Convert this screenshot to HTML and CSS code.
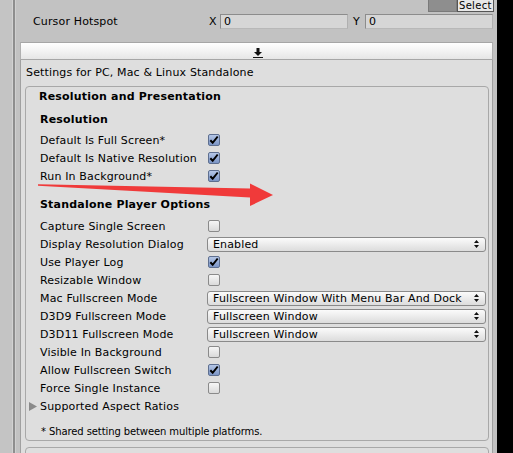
FILE: index.html
```html
<!DOCTYPE html>
<html>
<head>
<meta charset="utf-8">
<link rel="stylesheet" href="styles.css">
</head>
<body>
<div class="window">
  <div class="gutter"></div>
  <div class="sep"></div>
  <div class="main">
    <div class="top">
      <div class="select-row"><div class="swatch"></div><div class="select-btn">Select</div></div>
      <div class="hotspot-row">
        <span class="hs-label">Cursor Hotspot</span>
        <span class="axis">X</span><div class="field">0</div>
        <span class="axis axis-y">Y</span><div class="field">0</div>
      </div>
    </div>
    <div class="bar">
      <svg class="down-icon" width="10" height="10" viewBox="0 0 10 10"><path d="M3.5 0h3v4h2.5l-4 4l-4-4h2.5z" fill="#111"/><rect x="0" y="9" width="10" height="1" fill="#111"/></svg>
    </div>
    <div class="panel">
      <div class="platform-title">Settings for PC, Mac &amp; Linux Standalone</div>
      <div class="box">
        <div class="heading">Resolution and Presentation</div>
        <div class="subheading sub-res">Resolution</div>
        <div class="row row-first"><span class="label">Default Is Full Screen*</span><span class="cb on"><svg viewBox="0 0 12 12"><path d="M2.3 6.2l2.4 2.6l5-6.3" fill="none" stroke="#000" stroke-width="2"/></svg></span></div>
        <div class="row"><span class="label">Default Is Native Resolution</span><span class="cb on"><svg viewBox="0 0 12 12"><path d="M2.3 6.2l2.4 2.6l5-6.3" fill="none" stroke="#000" stroke-width="2"/></svg></span></div>
        <div class="row"><span class="label">Run In Background*</span><span class="cb on"><svg viewBox="0 0 12 12"><path d="M2.3 6.2l2.4 2.6l5-6.3" fill="none" stroke="#000" stroke-width="2"/></svg></span></div>

        <div class="subheading sub-sa">Standalone Player Options</div>
        <div class="row row-sa"><span class="label">Capture Single Screen</span><span class="cb"></span></div>
        <div class="row"><span class="label">Display Resolution Dialog</span><div class="dropdown"><span>Enabled</span><svg class="updown" width="5" height="8" viewBox="0 0 5 8"><path d="M2.5 0l2.5 3h-5z M2.5 8l2.5-3h-5z" fill="#111"/></svg></div></div>
        <div class="row"><span class="label">Use Player Log</span><span class="cb on"><svg viewBox="0 0 12 12"><path d="M2.3 6.2l2.4 2.6l5-6.3" fill="none" stroke="#000" stroke-width="2"/></svg></span></div>
        <div class="row"><span class="label">Resizable Window</span><span class="cb"></span></div>
        <div class="row"><span class="label">Mac Fullscreen Mode</span><div class="dropdown"><span>Fullscreen Window With Menu Bar And Dock</span><svg class="updown" width="5" height="8" viewBox="0 0 5 8"><path d="M2.5 0l2.5 3h-5z M2.5 8l2.5-3h-5z" fill="#111"/></svg></div></div>
        <div class="row"><span class="label">D3D9 Fullscreen Mode</span><div class="dropdown"><span>Fullscreen Window</span><svg class="updown" width="5" height="8" viewBox="0 0 5 8"><path d="M2.5 0l2.5 3h-5z M2.5 8l2.5-3h-5z" fill="#111"/></svg></div></div>
        <div class="row"><span class="label">D3D11 Fullscreen Mode</span><div class="dropdown"><span>Fullscreen Window</span><svg class="updown" width="5" height="8" viewBox="0 0 5 8"><path d="M2.5 0l2.5 3h-5z M2.5 8l2.5-3h-5z" fill="#111"/></svg></div></div>
        <div class="row"><span class="label">Visible In Background</span><span class="cb"></span></div>
        <div class="row"><span class="label">Allow Fullscreen Switch</span><span class="cb on"><svg viewBox="0 0 12 12"><path d="M2.3 6.2l2.4 2.6l5-6.3" fill="none" stroke="#000" stroke-width="2"/></svg></span></div>
        <div class="row"><span class="label">Force Single Instance</span><span class="cb"></span></div>
        <div class="row foldout"><svg class="tri" width="8" height="9" viewBox="0 0 8 9"><path d="M0 0l8 4.5l-8 4.5z" fill="#8a8a8a"/></svg><span>Supported Aspect Ratios</span></div>
        <div class="footnote">* Shared setting between multiple platforms.</div>
      </div>
      <div class="box box-next"></div>
    </div>
  </div>
  <div class="black"></div>
</div>
<svg class="annot" width="513" height="453" viewBox="0 0 513 453"><path d="M38 184.3L250 188.5L250 183.5L273 195L250 206L250 197.5L38 185.7z" fill="#f03a3a"/></svg>
</body>
</html>
```

FILE: styles.css
```css
html, body {
  margin: 0;
  padding: 0;
}
body {
  position: relative;
  width: 513px;
  height: 453px;
  overflow: hidden;
  font-family: "DejaVu Sans", Verdana, sans-serif;
  font-size: 11px;
  letter-spacing: 0.15px;
  color: #000;
  background: #c2c2c2;
}
.window {
  display: flex;
  height: 453px;
  overflow: hidden;
}
.gutter {
  width: 12px;
  flex: none;
  background: #c4c4c4;
  border-right: 1px solid #d2d2d2;
}
.sep {
  width: 2px;
  flex: none;
  background: #8e8e8e;
}
.main {
  width: 482px;
  flex: none;
  display: flex;
  flex-direction: column;
  background: #c2c2c2;
  border-left: 1px solid #d0d0d0;
  box-sizing: border-box;
  overflow: hidden;
}
.black {
  flex: 1;
  background: #000;
}
.top {
  flex: none;
  height: 42px;
  padding-right: 3px;
  box-sizing: border-box;
}
.select-row {
  display: flex;
  justify-content: flex-end;
  height: 12px;
}
.swatch {
  width: 27px;
  height: 11px;
  background: #8e8e8e;
  border: 1px solid #7a7a7a;
  border-top: none;
}
.select-btn {
  width: 34px;
  height: 11px;
  line-height: 11px;
  font-size: 10px;
  letter-spacing: 0.3px;
  padding-left: 1px;
  background: #e8e8e8;
  border: 1px solid #555;
  border-top: none;
  white-space: nowrap;
  overflow: hidden;
}
.hotspot-row {
  display: flex;
  align-items: center;
  height: 15px;
  margin-top: 2px;
}
.hs-label {
  width: 193px;
  flex: none;
  padding-left: 17px;
  box-sizing: border-box;
  font-size: 11px;
}
.axis {
  width: 11px;
  flex: none;
  font-size: 11px;
}
.axis-y {
  margin-left: 5px;
  width: 12px;
}
.field {
  width: 128px;
  flex: none;
  height: 15px;
  box-sizing: border-box;
  background: #d6d6d6;
  border: 1px solid #8c8c8c;
  border-bottom-color: #b8b8b8;
  border-right-color: #b0b0b0;
  padding-left: 3px;
  line-height: 13px;
}
.bar {
  flex: none;
  height: 18px;
  margin: 0 4px 0 4px;
  box-sizing: border-box;
  background: linear-gradient(#ffffff, #e6e6e6);
  border-top: 1px solid #a6a6a6;
  border-bottom: 1px solid #a6a6a6;
  border-left: 1px solid #b0b0b0;
  border-right: 1px solid #b0b0b0;
  display: flex;
  justify-content: center;
  align-items: center;
}
.down-icon {
  display: block;
  margin-top: 4px;
  margin-left: 2px;
}
.panel {
  flex: 1 0 auto;
  margin: 0 4px 0 4px;
  background: #dedede;
  border-left: 1px solid #a0a0a0;
  border-right: 1px solid #a0a0a0;
  padding: 4px 3px 0 4px;
}
.platform-title {
  height: 18px;
  line-height: 18px;
  padding-left: 1px;
}
.box {
  margin-top: 4px;
  border: 1px solid #a8a8a8;
  border-radius: 4px;
  padding: 1px 2px 1px 14px;
  background: #dedede;
}
.heading, .subheading {
  height: 18px;
  line-height: 18px;
  font-weight: bold;
  letter-spacing: 0.2px;
}
.heading {
  margin-left: -1px;
}
.sub-res {
  margin-top: 5px;
}
.sub-sa {
  margin-top: 11px;
}
.row {
  display: flex;
  align-items: center;
  height: 18px;
}
.row-first {
  margin-top: 2px;
}
.row-sa {
  margin-top: 3px;
}
.label {
  width: 167px;
  flex: none;
  white-space: nowrap;
}
.cb {
  width: 12px;
  height: 12px;
  box-sizing: border-box;
  margin-left: 1px;
  border: 1px solid #8a8a8a;
  border-radius: 2px;
  background: linear-gradient(#f6f6f6, #dadada);
  display: flex;
}
.cb.on {
  border-color: #5e6f90;
  background: linear-gradient(#b4c6e6, #7b95c6);
}
.cb svg {
  width: 12px;
  height: 12px;
  margin: -1px;
  display: block;
}
.dropdown {
  flex: 1;
  height: 15px;
  box-sizing: border-box;
  border: 1px solid #8a8a8a;
  border-radius: 3px;
  background: linear-gradient(#fbfbfb, #dcdcdc);
  display: flex;
  align-items: center;
  justify-content: space-between;
  padding: 0 6px 0 5px;
  line-height: 13px;
  white-space: nowrap;
}
.updown {
  display: block;
}
.foldout {
  margin-left: -11px;
}
.tri {
  display: block;
  margin-right: 3px;
}
.footnote {
  margin-top: 10px;
  height: 14px;
  line-height: 14px;
  font-size: 10px;
  letter-spacing: -0.1px;
  padding-left: 1px;
}
.box-next {
  margin-top: 6px;
  height: 20px;
  padding: 0;
}
.annot {
  position: absolute;
  left: 0;
  top: 0;
  pointer-events: none;
}
```
